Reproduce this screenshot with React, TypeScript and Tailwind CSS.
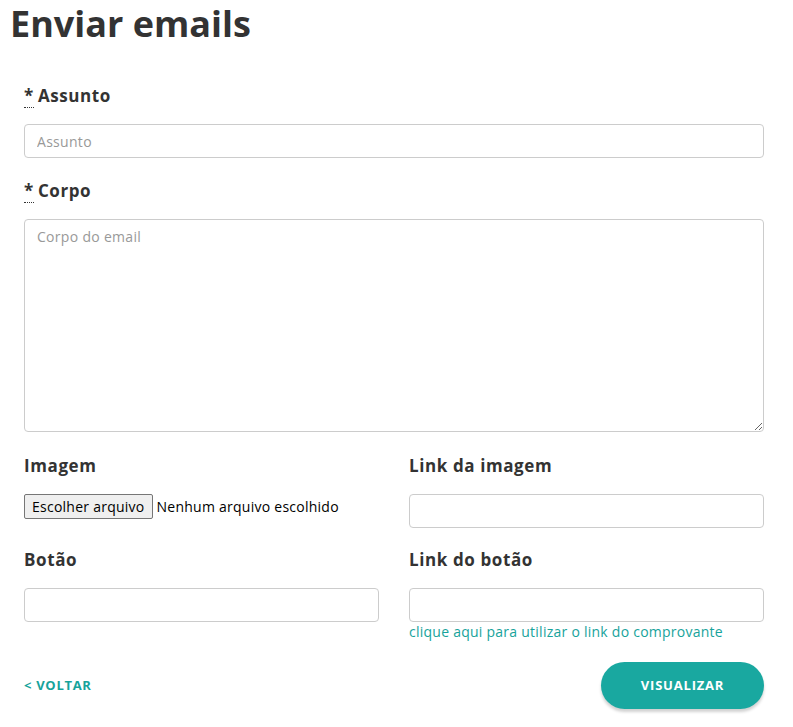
import React from "react";

const label = "block text-[17px] font-bold text-[#333] leading-[22px] tracking-[0.6px]";
const input =
  "block w-full h-[34px] rounded-[4px] border border-[#ccc] bg-white px-3 text-[14px] tracking-[0.3px] text-[#555] placeholder:text-[#999] outline-none";

function Required() {
  return (
    <abbr
      title="obrigatório"
      className="no-underline border-b border-dotted border-[#333] cursor-help mr-[4px]"
    >
      *
    </abbr>
  );
}

export default function App() {
  return (
    <div className="min-h-screen bg-white text-[#333]" style={{ fontFamily: "'Open Sans', sans-serif" }}>
      <div className="pl-[10px] pr-[29px]">
        <h1 className="text-[36px] font-bold leading-[48px] text-[#333] mb-[37px]">Enviar emails</h1>
      </div>

      <form className="px-[24px] pr-[29px]" onSubmit={(e) => e.preventDefault()}>
        <div className="mb-[22px]">
          <label className={label}>
            <Required />
            Assunto
          </label>
          <input className={`${input} mt-[17px]`} placeholder="Assunto" />
        </div>

        <div className="mb-[23px]">
          <label className={label}>
            <Required />
            Corpo
          </label>
          <textarea
            className="block w-full h-[213px] mt-[17px] rounded-[4px] border border-[#ccc] bg-white px-3 py-[6px] text-[14px] tracking-[0.3px] text-[#555] placeholder:text-[#999] outline-none"
            placeholder="Corpo do email"
          />
        </div>

        <div className="grid grid-cols-2 gap-x-[30px]">
          <div className="mb-[21px]">
            <label className={label}>Imagem</label>
            <div className="mt-[17px] flex items-start h-[34px]">
              <button
                type="button"
                className="h-[25px] px-[7px] border border-[#767676] rounded-[2px] bg-[#efefef] text-[14px] tracking-[0.25px] text-black leading-none"
              >
                Escolher arquivo
              </button>
              <span className="ml-[4px] text-[14px] leading-[25px] tracking-[0.25px] text-black">
                Nenhum arquivo escolhido
              </span>
            </div>
          </div>
          <div className="mb-[21px]">
            <label className={label}>Link da imagem</label>
            <input className={`${input} mt-[17px]`} />
          </div>

          <div>
            <label className={label}>Botão</label>
            <input className={`${input} mt-[17px]`} />
          </div>
          <div>
            <label className={label}>Link do botão</label>
            <input className={`${input} mt-[17px]`} />
            <a href="#" className="block mt-[0px] text-[14px] leading-[20px] text-[#17a39b] tracking-[0.25px]">
              clique aqui para utilizar o link do comprovante
            </a>
          </div>
        </div>

        <div className="flex items-center justify-between mt-[20px]">
          <a href="#" className="text-[13px] font-bold text-[#17a39b] tracking-[0.7px]">
            &lt; VOLTAR
          </a>
          <button
            type="submit"
            className="h-[47px] w-[163px] rounded-full bg-[#19a8a0] text-white text-[13px] font-bold tracking-[0.8px] shadow-[0_3px_3px_rgba(0,0,0,0.18)]"
          >
            VISUALIZAR
          </button>
        </div>
      </form>
    </div>
  );
}
